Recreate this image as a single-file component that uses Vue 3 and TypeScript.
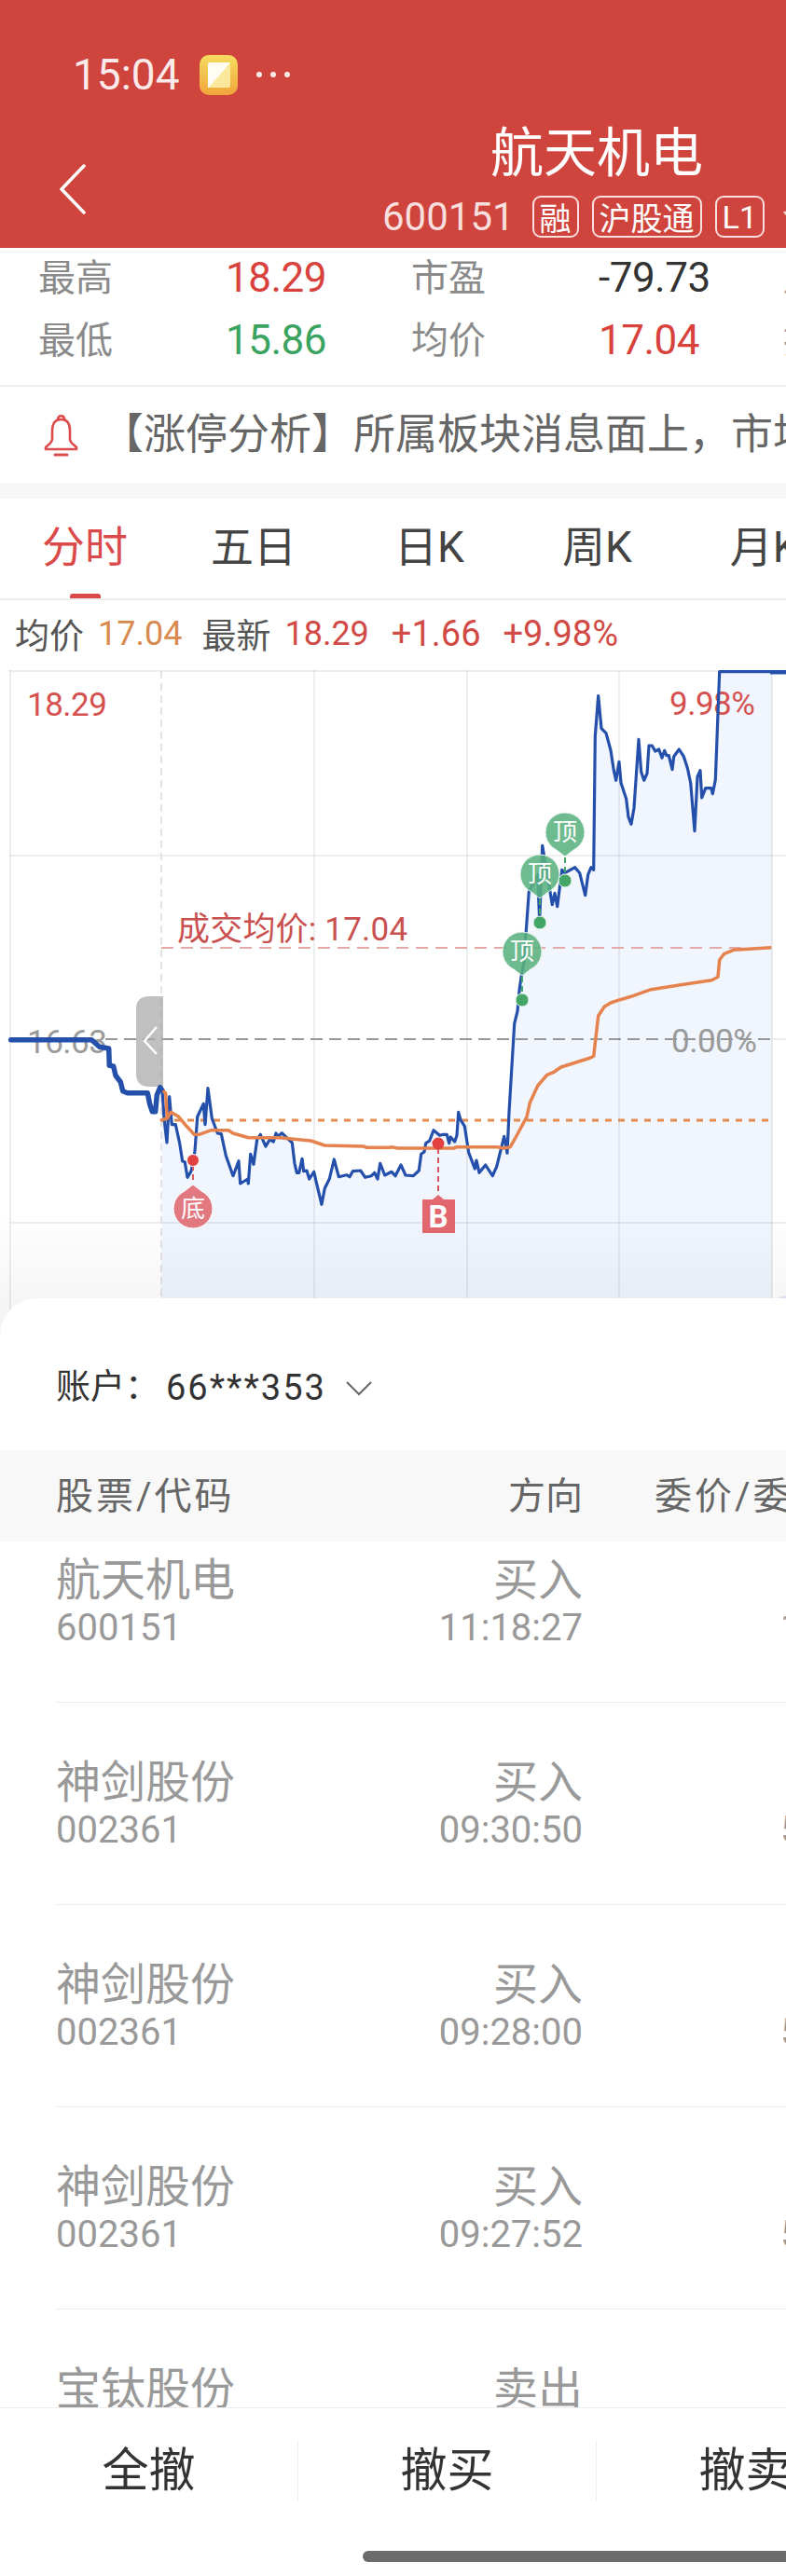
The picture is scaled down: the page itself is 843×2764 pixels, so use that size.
<script setup lang="ts">
type Pt = [number, number]

interface Order {
  name: string
  code: string
  side: string
  time: string
  qty: string
}

interface Marker {
  x: number
  bubbleY: number
  dotY: number
}

const STATS = [
  { label: '最高', value: '18.29', tone: 'up', label2: '市盈', value2: '-79.73', tone2: 'flat', extra: '成交' },
  { label: '最低', value: '15.86', tone: 'down', label2: '均价', value2: '17.04', tone2: 'up', extra: '换手' },
]

const TABS = ['分时', '五日', '日K', '周K', '月K', '更多']

const ORDERS: Order[] = [
  { name: '航天机电', code: '600151', side: '买入', time: '11:18:27', qty: '1000' },
  { name: '神剑股份', code: '002361', side: '买入', time: '09:30:50', qty: '5000' },
  { name: '神剑股份', code: '002361', side: '买入', time: '09:28:00', qty: '5000' },
  { name: '神剑股份', code: '002361', side: '买入', time: '09:27:52', qty: '5000' },
  { name: '宝钛股份', code: '600456', side: '卖出', time: '09:26:11', qty: '3000' },
]

const ACTIONS = ['全撤', '撤买', '撤卖']

const TOP_MARKERS: Marker[] = [
  { x: 560, bubbleY: 1021, dotY: 1073 },
  { x: 579, bubbleY: 938, dotY: 990 },
  { x: 606, bubbleY: 893, dotY: 945 },
]

const GRID_V = [11, 337, 501, 664, 828]
const GRID_H = [720, 918, 1312]

// curve points were read off 3x crops, so each run keeps its crop origin
const shift = (pts: Pt[], ox: number, oy: number): Pt[] =>
  pts.map(([x, y]) => [ox + x / 3, oy + y / 3] as Pt)

const toPath = (pts: Pt[]) =>
  pts.map(([x, y], i) => `${i ? 'L' : 'M'}${x.toFixed(1)} ${y.toFixed(1)}`).join(' ')

const preMarket = shift(
  [
    [35, 347], [295, 347], [320, 370], [350, 375], [352, 430], [365, 432], [372, 462], [388, 483],
    [395, 512], [410, 518], [475, 518], [482, 555], [490, 578], [500, 578], [505, 525], [515, 500], [522, 510],
  ],
  0,
  1000,
)

const price: Pt[] = [
  ...shift(
    [
      [522, 510], [528, 600], [537, 678], [545, 530], [553, 620], [565, 620], [578, 680], [587, 738], [595, 740],
      [603, 790], [615, 770], [622, 735], [627, 705], [635, 595], [655, 553], [660, 620], [669, 503], [682, 600],
      [700, 648], [712, 650], [727, 720], [750, 785], [768, 737], [773, 810], [797, 795], [799, 810], [806, 715],
      [816, 748], [827, 668], [838, 652], [855, 690], [868, 668], [880, 675], [888, 648], [895, 658], [907, 647],
      [920, 660], [940, 678], [948, 745], [955, 775], [962, 775], [972, 730], [977, 770], [987, 768], [995, 795],
      [1010, 772], [1020, 815], [1035, 877], [1045, 825], [1060, 795], [1075, 732], [1090, 788], [1115, 782],
      [1125, 788], [1135, 770], [1160, 768], [1175, 790], [1195, 785], [1205, 775], [1215, 795], [1223, 745], [1238, 783],
    ],
    0,
    1000,
  ),
  ...shift(
    [
      [0, 772], [12, 785], [30, 750], [45, 783], [70, 785], [88, 768], [95, 715], [105, 708], [110, 680], [122, 672],
      [135, 638], [155, 655], [165, 652], [178, 652], [185, 680], [190, 660], [203, 675], [210, 655], [215, 580],
      [222, 605], [235, 625], [248, 710], [268, 762], [273, 735], [282, 775], [302, 750], [325, 785], [338, 755],
      [362, 658], [372, 712], [378, 580], [395, 295], [405, 255], [412, 180], [418, 140], [425, 100],
    ],
    420,
    1000,
  ),
  ...shift(
    [
      [433, 895], [442, 770], [470, 715], [476, 865], [485, 622], [517, 812], [525, 775], [533, 818], [548, 700],
      [557, 710], [575, 700], [590, 692], [605, 710], [623, 782], [632, 715], [642, 692], [650, 700], [655, 270],
      [665, 140], [675, 245], [690, 260], [705, 315], [715, 380], [722, 412], [732, 352], [738, 420], [755, 472],
      [762, 530], [771, 553], [780, 500], [795, 280], [803, 385], [812, 412], [822, 390], [828, 300], [838, 300],
      [848, 318], [860, 312], [870, 340], [878, 316], [885, 332], [892, 332], [903, 377], [908, 335], [925, 312],
      [940, 335], [952, 372], [962, 420], [975, 575], [984, 400], [993, 380], [998, 468], [1010, 437], [1028, 437],
      [1033, 455], [1042, 410], [1055, 62], [1220, 62],
    ],
    420,
    700,
  ),
]

const average: Pt[] = [
  ...shift(
    [
      [525, 510], [533, 520], [538, 600], [520, 605], [538, 600], [550, 580], [575, 595], [600, 625], [625, 652],
      [640, 652], [680, 638], [735, 638], [750, 648], [800, 662], [900, 662], [1000, 672], [1045, 687], [1170, 690],
      [1180, 694], [1255, 694],
    ],
    0,
    1000,
  ),
  ...shift(
    [
      [0, 692], [20, 696], [200, 696], [210, 692], [340, 692], [360, 696], [382, 692], [400, 660], [435, 595],
      [445, 550], [470, 495], [500, 460], [520, 452], [545, 435], [640, 405], [650, 400], [665, 270], [685, 240],
      [705, 228], [735, 218], [770, 208], [835, 185], [930, 170], [1030, 155], [1050, 145], [1055, 90], [1070, 70],
      [1100, 58], [1222, 50],
    ],
    420,
    1000,
  ),
]

const pricePath = toPath(price)
const preMarketPath = toPath(preMarket)
const averagePath = toPath(average)
const areaPath = `${pricePath} L828 720.7 L828 1393 L173 1393 Z`
</script>

<template>
  <div class="viewport">
    <div class="page">
      <header class="hero">
        <div class="status">
          <span class="clock">15:04</span>
          <svg class="app-icon" width="41" height="43" viewBox="0 0 41 43">
            <defs>
              <linearGradient id="noteFill" x1="0" y1="0" x2="0" y2="1">
                <stop offset="0" stop-color="#f6dc5f" />
                <stop offset="1" stop-color="#f1a53c" />
              </linearGradient>
            </defs>
            <rect width="41" height="43" rx="10" fill="url(#noteFill)" />
            <rect x="9" y="8" width="24" height="27" rx="2" fill="#fbe89c" />
            <path d="M9 10 Q9 8 11 8 H33 L10 35 L9 35 Z" fill="#fffdf4" />
          </svg>
          <span class="status-dots"><i /><i /><i /></span>
        </div>

        <div class="hero-row">
          <svg class="back" width="29" height="54" viewBox="0 0 29 54" fill="none">
            <path d="M27 2 L3 27 L27 52" stroke="#fff" stroke-width="3.5" stroke-linecap="round" stroke-linejoin="round" />
          </svg>
          <div class="hero-title">
            <h1>航天机电</h1>
            <div class="hero-sub">
              <span class="hero-code">600151</span>
              <span class="tag">融</span>
              <span class="tag">沪股通</span>
              <span class="tag">L1</span>
              <svg class="hero-more" width="24" height="16" viewBox="0 0 24 16" fill="none">
                <path d="M2 2 L12 14 L22 2" stroke="#f6d5d3" stroke-width="2.5" />
              </svg>
            </div>
          </div>
          <span />
        </div>
      </header>

      <section class="stats">
        <div v-for="row in STATS" :key="row.label" class="stat-row">
          <span class="stat-label">{{ row.label }}</span>
          <span class="stat-value" :class="row.tone">{{ row.value }}</span>
          <span class="stat-label">{{ row.label2 }}</span>
          <span class="stat-value" :class="row.tone2">{{ row.value2 }}</span>
          <span class="stat-label">{{ row.extra }}</span>
        </div>
      </section>

      <section class="notice">
        <svg class="bell" width="37" height="46" viewBox="0 0 37 46" fill="none" stroke="#dd4c4c" stroke-width="2.6">
          <path d="M18.5 6 C11 6 9 12 9 18 V27 C9 31 5 33 2 36 V38 H35 V36 C32 33 28 31 28 27 V18 C28 12 26 6 18.5 6 Z" stroke-linejoin="round" />
          <path d="M15 6 C15 1 22 1 22 6" />
          <path d="M12 44 H25" stroke-width="3" stroke-linecap="round" />
        </svg>
        <p>【涨停分析】所属板块消息面上，市场资金持续关注商业航天概念</p>
      </section>

      <nav class="tabs">
        <div v-for="(tab, i) in TABS" :key="tab" class="tab" :class="{ active: i === 0 }">
          <span>{{ tab }}</span>
          <i />
        </div>
      </nav>

      <div class="legend">
        <span class="legend-label">均价</span>
        <span class="legend-num avg">17.04</span>
        <span class="legend-label latest">最新</span>
        <span class="legend-num">18.29</span>
        <span class="legend-num wide">+1.66</span>
        <span class="legend-num wide">+9.98%</span>
      </div>

      <svg class="chart" width="843" height="720" viewBox="0 719 843 720" fill="none">
        <defs>
          <linearGradient id="sheetShade" gradientUnits="userSpaceOnUse" x1="0" y1="1300" x2="0" y2="1430">
            <stop offset="0" stop-color="#000" stop-opacity="0" />
            <stop offset="1" stop-color="#000" stop-opacity="0.05" />
          </linearGradient>
        </defs>

        <path :d="areaPath" fill="#f0f5fe" />

        <line v-for="x in GRID_V" :key="x" :x1="x" :x2="x" y1="719" y2="1439" class="grid" />
        <line v-for="y in GRID_H" :key="y" x1="10" x2="843" :y1="y" :y2="y" class="grid" />
        <line x1="828" x2="843" y1="1115" y2="1115" class="grid" />
        <line x1="173" x2="173" y1="720" y2="1393" class="grid-dash" />

        <text x="29" y="768" class="axis up">18.29</text>
        <text x="718" y="767" class="axis up">9.98%</text>
        <text x="29" y="1130" class="axis muted">16.63</text>
        <text x="720" y="1129" class="axis muted">0.00%</text>
        <text x="190" y="1009" class="avg-note">成交均价: 17.04</text>

        <line x1="173" x2="800" y1="1017" y2="1017" class="line-pink" />
        <line x1="113" x2="828" y1="1115" y2="1115" class="line-base" />
        <line x1="173" x2="824" y1="1202" y2="1202" class="line-orange" />

        <path d="M175 1069 H160 Q146 1069 146 1083 V1152 Q146 1166 160 1166 H175 Z" fill="#a8a8a8" fill-opacity="0.72" />
        <path d="M168 1102 L155 1117 L168 1131" stroke="#fff" stroke-width="2.5" />

        <path :d="preMarketPath" stroke="#2450ab" stroke-width="5.5" stroke-linecap="round" stroke-linejoin="round" />
        <path :d="pricePath" stroke="#2450ab" stroke-width="3.2" stroke-linejoin="round" />
        <path d="M826 721 H843" stroke="#2450ab" stroke-width="5" />
        <path :d="averagePath" stroke="#e5824d" stroke-width="3.5" stroke-linejoin="round" />

        <!-- bottom marker -->
        <line x1="207" x2="207" y1="1250" y2="1270" class="link-red" />
        <circle cx="207" cy="1245" r="6.5" fill="#e24141" stroke="#fff" />
        <g transform="translate(207 1297)">
          <path d="M0 -26 L-9 -19 A21 21 0 1 0 9 -19 Z" fill="#e27880" stroke="#fff" stroke-width="1" />
          <text y="9" text-anchor="middle" class="marker-text">底</text>
        </g>

        <!-- buy marker -->
        <line x1="470" x2="470" y1="1232" y2="1282" class="link-red" />
        <circle cx="470" cy="1227" r="6.5" fill="#e24141" />
        <path d="M453 1287 H464 L470 1282 L476 1287 H488 V1323 H453 Z" fill="#e2676e" />
        <text x="470" y="1317" text-anchor="middle" class="marker-b">B</text>

        <!-- top markers -->
        <g v-for="m in TOP_MARKERS" :key="m.x">
          <line :x1="m.x" :x2="m.x" :y1="m.bubbleY + 27" :y2="m.dotY - 5" class="link-green" />
          <circle :cx="m.x" :cy="m.dotY" r="7" fill="#43a566" stroke="#e6f3ec" />
          <g :transform="`translate(${m.x} ${m.bubbleY})`">
            <path d="M0 26 L-9 19 A21 21 0 1 1 9 19 Z" fill="#5ab280" fill-opacity="0.88" stroke="#e6f3ec" stroke-width="1" />
            <text y="9" text-anchor="middle" class="marker-text">顶</text>
          </g>
        </g>

        <circle cx="850" cy="1440" r="50" fill="#dfe6f5" />
        <rect x="0" y="1300" width="843" height="139" fill="url(#sheetShade)" />
      </svg>

      <section class="sheet">
        <div class="account">
          <span class="account-label">账户：</span>
          <span class="account-no">66***353</span>
          <svg width="30" height="17" viewBox="0 0 30 17" fill="none">
            <path d="M2 2 L15 15 L28 2" stroke="#666" stroke-width="2" />
          </svg>
        </div>

        <div class="order-head">
          <span class="col-name">股票/代码</span>
          <span class="col-side">方向</span>
          <span class="col-price">委价/委量</span>
        </div>

        <div class="order-list">
          <div class="order-track">
            <div v-for="(order, i) in ORDERS" :key="i" class="order">
              <div class="col-name">
                <div class="order-main">{{ order.name }}</div>
                <div class="order-sub">{{ order.code }}</div>
              </div>
              <div class="col-side">
                <div class="order-main">{{ order.side }}</div>
                <div class="order-sub">{{ order.time }}</div>
              </div>
              <div class="order-qty order-sub">{{ order.qty }}</div>
            </div>
          </div>
        </div>

        <footer class="actions">
          <div class="action-row">
            <button v-for="action in ACTIONS" :key="action" type="button">{{ action }}</button>
          </div>
          <div class="home-bar" />
        </footer>
      </section>
    </div>
  </div>
</template>

<style>
html,
body {
  margin: 0;
  background: #fff;
  overflow: hidden;
}
</style>

<style scoped>
.viewport {
  width: 843px;
  height: 2764px;
  overflow: hidden;
}

.page {
  position: relative;
  width: 1280px;
  height: 2764px;
  background: #fff;
  color: #333;
  font-family: Roboto, "Noto Sans CJK SC", sans-serif;
}

/* ── Red header ─────────────────────────────────────────────────────────── */
.hero {
  height: 266px;
  box-sizing: border-box;
  padding-top: 57px;
  background: #cf453e;
  color: #fff;
}

.status {
  display: flex;
  align-items: center;
  height: 46px;
  padding-left: 78px;
}

.clock {
  font-size: 46px;
  line-height: 46px;
  color: #fbeae9;
}

.app-icon {
  margin-left: 21px;
}

.status-dots {
  display: flex;
  gap: 9px;
  margin-left: 20px;
}

.status-dots i {
  width: 6px;
  height: 6px;
  border-radius: 50%;
  background: #fbeae9;
}

.hero-row {
  display: grid;
  grid-template-columns: 1fr auto 1fr;
  align-items: center;
  margin-top: 32px;
}

.back {
  margin: 16px 0 0 63px;
}

.hero-title {
  display: flex;
  flex-direction: column;
  align-items: center;
}

.hero-title h1 {
  margin: 0;
  font-size: 57px;
  font-weight: 400;
  line-height: 60px;
}

.hero-sub {
  display: flex;
  align-items: center;
  gap: 14px;
  height: 45px;
  margin-top: 15px;
  color: #f8dedd;
}

.hero-code {
  margin-right: 5px;
  font-size: 42px;
  line-height: 45px;
}

.tag {
  display: flex;
  align-items: center;
  justify-content: center;
  box-sizing: border-box;
  height: 45px;
  min-width: 48px;
  padding: 0 6px;
  border: 2px solid #f8dedd;
  border-radius: 9px;
  font-size: 34px;
  color: #fff;
}

.hero-more {
  flex: none;
  margin: 0 7px 0 5px;
}

/* ── Quote table ────────────────────────────────────────────────────────── */
.stats {
  display: flex;
  flex-direction: column;
  gap: 5px;
  height: 149px;
  box-sizing: border-box;
  padding-left: 41px;
  border-bottom: 2px solid #eee;
}

.stat-row {
  display: grid;
  grid-template-columns: 201px 199px 201px 198px auto;
  align-items: center;
  justify-content: start;
  height: 62px;
}

.stat-label {
  margin-bottom: 6px;
  font-size: 40px;
  color: #8a8a8a;
}

.stat-value {
  font-size: 44px;
  letter-spacing: -0.5px;
}

.up {
  color: #d8413c;
}

.down {
  color: #3aa35f;
}

.flat {
  color: #333;
}

/* ── Notice ─────────────────────────────────────────────────────────────── */
.notice {
  display: flex;
  align-items: center;
  height: 103px;
  padding-left: 47px;
  gap: 25px;
  border-bottom: 17px solid #f7f7f7;
}

.bell {
  flex: none;
}

.notice p {
  margin: 0;
  font-size: 45px;
  line-height: 1.2;
  color: #666;
  white-space: nowrap;
}

/* ── Tabs ───────────────────────────────────────────────────────────────── */
.tabs {
  display: flex;
  gap: 105px;
  height: 109px;
  box-sizing: border-box;
  padding: 26px 0 0 45px;
  border-bottom: 2px solid #eee;
}

.tab {
  display: flex;
  flex-direction: column;
  align-items: center;
  font-size: 46px;
  line-height: 52px;
  color: #444;
}

.tab:first-child {
  margin-right: -16px;
}

.tab i {
  width: 33px;
  height: 5px;
  margin-top: 24px;
  border-radius: 3px 3px 0 0;
}

.tab.active {
  color: #db4a4a;
}

.tab.active i {
  background: #db4a4a;
}

/* ── Chart ──────────────────────────────────────────────────────────────── */
.legend {
  display: flex;
  align-items: center;
  height: 75px;
  box-sizing: border-box;
  padding: 0 0 3px 16px;
  gap: 15px;
  font-size: 37px;
}

.legend-label {
  color: #555;
}

.legend-label.latest {
  margin-left: 6px;
}

.legend-num {
  font-size: 36px;
  color: #d24a45;
}

.legend-num.avg {
  color: #d98a4f;
}

.legend-num.wide {
  margin-left: 9px;
  font-size: 38px;
}

.chart {
  display: block;
}

.grid {
  stroke: #000;
  stroke-opacity: 0.065;
  stroke-width: 2;
}

.grid-dash {
  stroke: #e2e2e2;
  stroke-width: 2;
  stroke-dasharray: 8 5;
}

.line-pink {
  stroke: #e3a9a9;
  stroke-width: 2;
  stroke-dasharray: 13 8;
}

.line-base {
  stroke: #979797;
  stroke-width: 2;
  stroke-dasharray: 13 7;
}

.line-orange {
  stroke: #e58a4f;
  stroke-width: 3;
  stroke-dasharray: 7 7;
}

.link-red {
  stroke: #d9555f;
  stroke-width: 2;
  stroke-dasharray: 6 4;
}

.link-green {
  stroke: #43a566;
  stroke-width: 2;
  stroke-dasharray: 6 4;
}

.axis {
  font-size: 35px;
  letter-spacing: -0.5px;
}

.axis.up {
  fill: #d5504f;
}

.axis.muted {
  fill: #9a9a9a;
}

.avg-note {
  font-size: 35px;
  letter-spacing: 0.2px;
  fill: #c9504f;
}

.marker-text {
  font-size: 26px;
  fill: #fff;
}

.marker-b {
  font-size: 33px;
  font-weight: 700;
  fill: #fff;
}

/* ── Bottom sheet ───────────────────────────────────────────────────────── */
.sheet {
  position: absolute;
  top: 1393px;
  left: 0;
  right: 0;
  bottom: 0;
  display: flex;
  flex-direction: column;
  background: #fff;
  border-radius: 40px 40px 0 0;
}

.account {
  display: flex;
  align-items: center;
  flex: none;
  height: 163px;
  box-sizing: border-box;
  padding: 71px 0 42px 60px;
  color: #333;
}

.account-label {
  font-size: 37px;
  line-height: 50px;
}

.account-no {
  margin-left: 7px;
  font-size: 38px;
  line-height: 50px;
  letter-spacing: 2px;
}

.account svg {
  margin-left: 20px;
}

.order-head,
.order {
  display: flex;
  padding-left: 60px;
}

.order-head {
  flex: none;
  align-items: center;
  height: 98px;
  box-sizing: border-box;
  padding-bottom: 6px;
  background: #f8f8f8;
  font-size: 40px;
  color: #666;
}

.order-head .col-name,
.order-head .col-price {
  letter-spacing: 3px;
}

.col-name {
  width: 420px;
}

.col-side {
  display: flex;
  flex-direction: column;
  align-items: flex-end;
  width: 145px;
  white-space: nowrap;
}

.col-price {
  margin-left: 77px;
  white-space: nowrap;
}

.order-list {
  flex: 1;
  min-height: 0;
  overflow: hidden;
}

.order-track {
  margin-top: -44px;
}

.order {
  position: relative;
  height: 217px;
  box-sizing: border-box;
  padding-top: 58px;
  color: #999;
}

.order::after {
  content: "";
  position: absolute;
  left: 60px;
  right: 0;
  bottom: 0;
  border-bottom: 1px solid #eee;
}

.order-main {
  font-size: 48px;
  line-height: 56px;
}

.order-sub {
  font-size: 40px;
  line-height: 46px;
}

.order-qty {
  width: 225px;
  margin-left: 77px;
  padding-top: 56px;
  text-align: right;
}

.actions {
  flex: none;
  height: 181px;
  box-sizing: border-box;
  padding-top: 35px;
  border-top: 1px solid #eee;
  background: #fff;
}

.action-row {
  display: flex;
  height: 65px;
}

.action-row button {
  width: 320px;
  padding: 0;
  border: 0;
  border-right: 1px solid #eee;
  background: none;
  font: inherit;
  font-size: 50px;
  line-height: 65px;
  color: #333;
}

.home-bar {
  width: 502px;
  height: 12px;
  margin: 53px 0 0 389px;
  border-radius: 6px;
  background: #6b6b6b;
}
</style>
